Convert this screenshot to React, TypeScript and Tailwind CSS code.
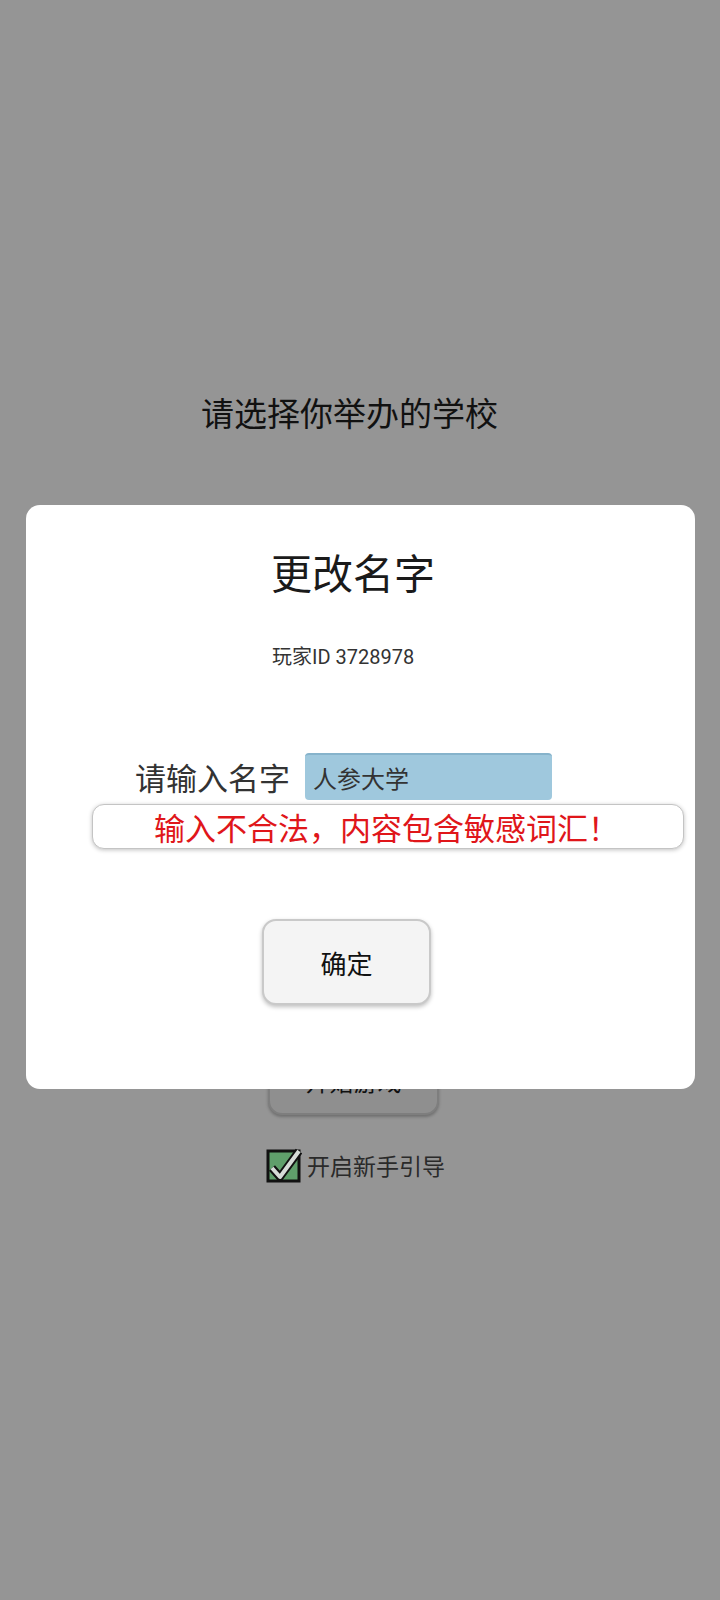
import React from 'react';

const FONT = { fontFamily: '"Noto Sans CJK SC", "Noto Sans", sans-serif' };
const LATIN = { fontFamily: 'Roboto, "Noto Sans CJK SC", sans-serif' };

function GuideCheckbox() {
  return (
    <svg width="36" height="36" viewBox="0 0 36 36" className="shrink-0">
      <rect x="2" y="4" width="31" height="30" fill="#5f9f6b" stroke="#111" strokeWidth="3" />
      {/* check mark: black outline under a pale stroke */}
      <path d="M6 21 L14 30 L33 4" fill="none" stroke="#111" strokeWidth="8" strokeLinejoin="round" />
      <path d="M6 21 L14 30 L33 4" fill="none" stroke="#d6dcd8" strokeWidth="4" strokeLinejoin="round" />
    </svg>
  );
}

export default function App() {
  return (
    <div className="relative w-[720px] h-[1600px] overflow-hidden bg-[#959595]" style={FONT}>
      {/* page underneath the dimmed overlay */}
      <div className="flex flex-col items-start">
        <div className="mt-[392px] ml-[201px] text-[33px] leading-[40px] text-[#111]">
          请选择你举办的学校
        </div>
        <div className="mt-[597px] ml-[268px] w-[171px] h-[86px] rounded-[14px] border-2 border-[#7e7e7e] bg-[#8f8f8f] shadow-[0_2px_3px_rgba(0,0,0,0.25)] flex items-center justify-center pt-[18px] text-[24px] text-[#111]">
          开始游戏
        </div>
        <div className="mt-[32px] ml-[266px] flex items-center gap-[5px]">
          <GuideCheckbox />
          <span className="text-[23px] leading-[32px] text-[#2a2a2a]">开启新手引导</span>
        </div>
      </div>

      {/* rename dialog */}
      <div className="absolute left-[26px] top-[505px] w-[669px] h-[584px] rounded-[14px] bg-white flex flex-col items-start">
        <div className="mt-[42px] ml-[245px] text-[41px] leading-[48px] text-[#1a1a1a]">更改名字</div>
        <div className="mt-[50px] ml-[246px] text-[20px] leading-[24px] text-[#333]" style={LATIN}>
          玩家ID 3728978
        </div>

        <div className="mt-[84px] ml-[109px] flex items-center">
          <span className="text-[31px] leading-[36px] text-[#333]">请输入名字</span>
          <div className="ml-[15px] w-[247px] h-[47px] rounded-[4px] bg-[#9fc8dd] border-t-2 border-[#86b3cb] flex items-center pl-[8px] text-[24px] text-[#333]">
            人参大学
          </div>
        </div>

        <div className="mt-[4px] ml-[66px] w-[592px] h-[45px] rounded-[12px] border border-[#c4c4c4] bg-white shadow-[0_1px_4px_rgba(0,0,0,0.25)] flex items-center pl-[61px] text-[31px] leading-[36px] text-[#e0161a]">
          输入不合法，内容包含敏感词汇！
        </div>

        <div className="mt-[70px] ml-[236px] w-[169px] h-[86px] rounded-[14px] border-2 border-[#c9c9c9] bg-[#f4f4f4] shadow-[0_2px_4px_rgba(0,0,0,0.25)] flex items-center justify-center text-[26px] text-[#111]">
          确定
        </div>
      </div>
    </div>
  );
}
